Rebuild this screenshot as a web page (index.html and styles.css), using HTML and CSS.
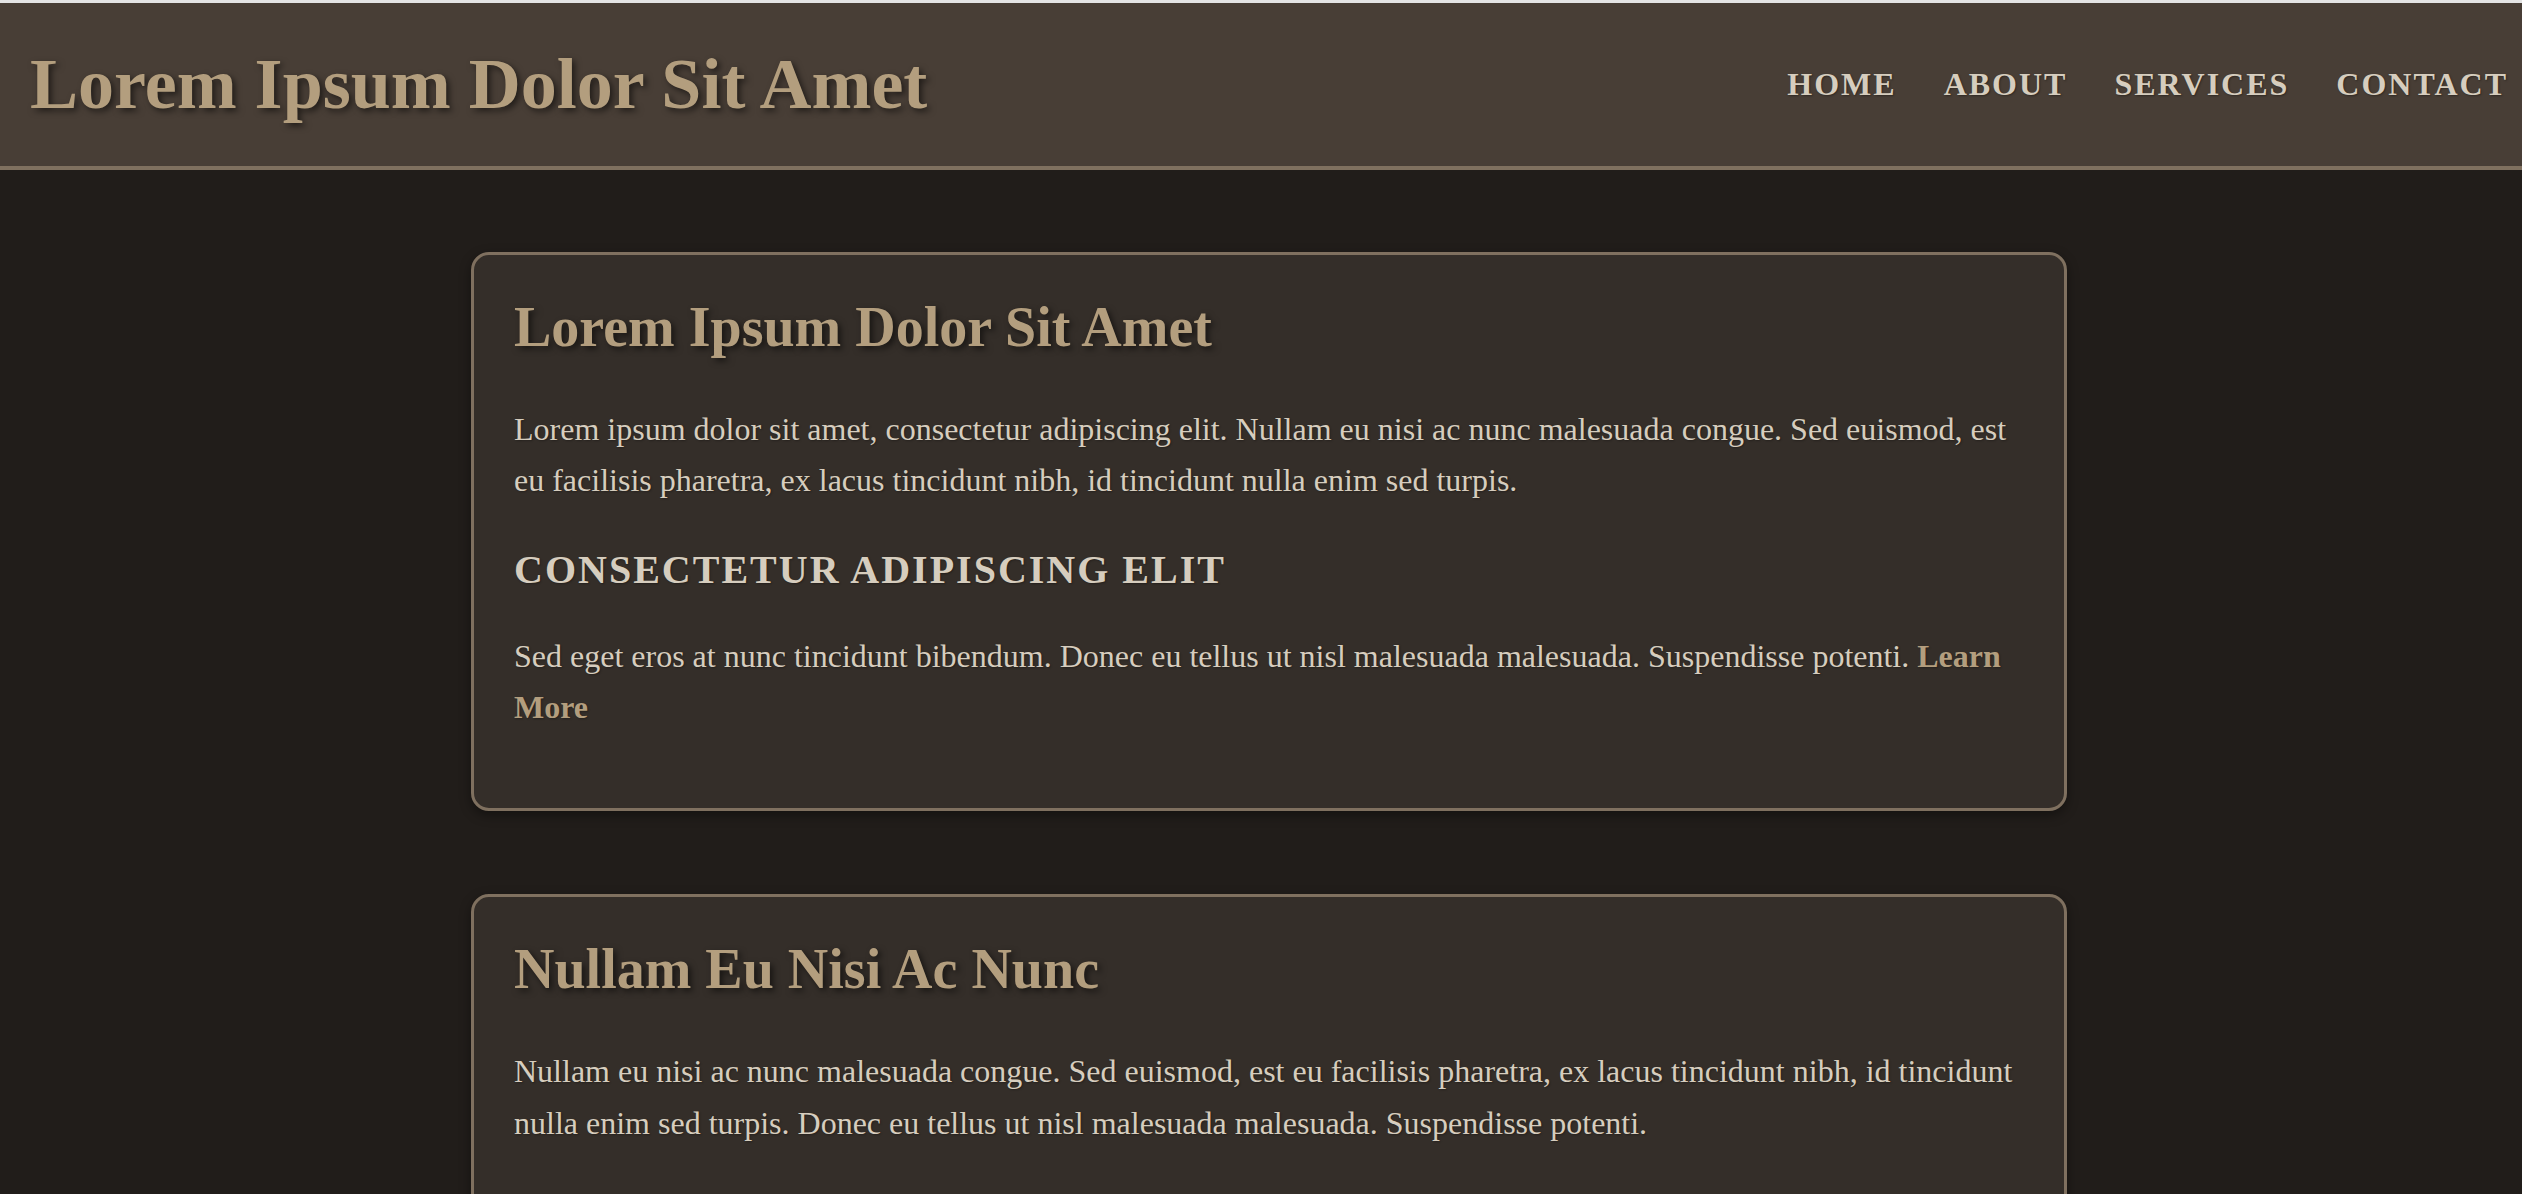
FILE: index.html
```html
<!DOCTYPE html>
<html lang="en">
<head>
<meta charset="utf-8">
<title>Lorem Ipsum Dolor Sit Amet</title>
<link rel="stylesheet" href="styles.css">
</head>
<body>
<header class="site-header">
  <h1 class="site-title">Lorem Ipsum Dolor Sit Amet</h1>
  <nav class="site-nav">
    <a href="#" class="nav-link">Home</a>
    <a href="#" class="nav-link">About</a>
    <a href="#" class="nav-link">Services</a>
    <a href="#" class="nav-link">Contact</a>
  </nav>
</header>
<main class="content">
  <section class="card">
    <h2 class="card-title">Lorem Ipsum Dolor Sit Amet</h2>
    <p class="card-text">Lorem ipsum dolor sit amet, consectetur adipiscing elit. Nullam eu nisi ac nunc malesuada congue. Sed euismod, est eu facilisis pharetra, ex lacus tincidunt nibh, id tincidunt nulla enim sed turpis.</p>
    <h3 class="card-subtitle">Consectetur Adipiscing Elit</h3>
    <p class="card-text">Sed eget eros at nunc tincidunt bibendum. Donec eu tellus ut nisl malesuada malesuada. Suspendisse potenti. <a href="#" class="card-link">Learn More</a></p>
  </section>
  <section class="card">
    <h2 class="card-title">Nullam Eu Nisi Ac Nunc</h2>
    <p class="card-text">Nullam eu nisi ac nunc malesuada congue. Sed euismod, est eu facilisis pharetra, ex lacus tincidunt nibh, id tincidunt nulla enim sed turpis. Donec eu tellus ut nisl malesuada malesuada. Suspendisse potenti.</p>
  </section>
</main>
</body>
</html>
```

FILE: styles.css
```css
html, body {
  margin: 0;
  padding: 0;
}

body {
  background: #211d1a;
  color: #d6cdbe;
  font-family: "Liberation Serif", "Times New Roman", serif;
  font-size: 32px;
  line-height: 1.6;
  border-top: 3px solid #e4e4e4;
}

.site-header {
  display: flex;
  align-items: center;
  justify-content: space-between;
  background: #483e36;
  border-bottom: 4px solid #7f705f;
  padding: 40px 14px 40px 30px;
}

.site-title {
  margin: 0;
  font-size: 72px;
  font-weight: bold;
  line-height: 1.15;
  color: #b39e7e;
  text-shadow: 3px 3px 6px rgba(0, 0, 0, 0.55);
}

.site-nav {
  display: flex;
  gap: 47px;
}

.nav-link {
  color: #d6cdbe;
  text-decoration: none;
  text-transform: uppercase;
  font-weight: bold;
  font-size: 32px;
  letter-spacing: 2px;
  text-shadow: 1px 1px 2px rgba(0, 0, 0, 0.35);
}

.content {
  width: 1596px;
  margin: 0 auto;
  padding: 82px 0 0 16px;
}

.card {
  background: #342e29;
  border: 3px solid #7f705f;
  border-radius: 18px;
  padding: 40px 40px 43px;
  margin-bottom: 83px;
  box-shadow: 0 4px 12px rgba(0, 0, 0, 0.4);
}

.card-title {
  margin: 0 0 45px;
  font-size: 56px;
  font-weight: bold;
  line-height: 1.15;
  color: #b39e7e;
  text-shadow: 3px 3px 6px rgba(0, 0, 0, 0.55);
}

.card-text {
  margin: 0 0 32px;
  text-shadow: 1px 1px 2px rgba(0, 0, 0, 0.3);
}

.card-subtitle {
  margin: 40px 0 38px;
  font-size: 40px;
  font-weight: bold;
  line-height: 1.15;
  letter-spacing: 2px;
  text-transform: uppercase;
  color: #d6cdbe;
  text-shadow: 1px 1px 2px rgba(0, 0, 0, 0.3);
}

.card-link {
  color: #b39e7e;
  font-weight: bold;
  text-decoration: none;
}
```
